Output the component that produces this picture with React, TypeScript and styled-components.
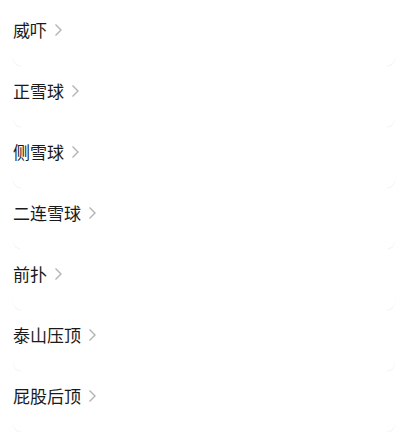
import styled, { createGlobalStyle } from 'styled-components';

const GlobalStyle = createGlobalStyle`
  html, body {
    margin: 0;
    padding: 0;
    background: #ffffff;
  }
  body {
    font-family: "Noto Sans CJK SC", "Noto Sans", sans-serif;
  }
`;

const List = styled.div`
  display: flex;
  flex-direction: column;
  padding-top: 5px;
`;

const Card = styled.div`
  display: flex;
  align-items: center;
  height: 61px;
  box-sizing: border-box;
  padding: 14px 0 25px 0;
  margin: 0 14px 0 13px;
  border-radius: 9px;
  background: #ffffff;
  box-shadow: 0 1px 1px rgba(0, 0, 0, 0.06);
`;

const Label = styled.span`
  font-size: 17px;
  line-height: 22px;
  color: #1a1a1a;
`;

const Chevron = styled.svg`
  margin-left: 7px;
  width: 9px;
  height: 14px;
`;

const items = ['威吓', '正雪球', '侧雪球', '二连雪球', '前扑', '泰山压顶', '屁股后顶'];

const App: React.FC = () => {
  return (
    <>
      <GlobalStyle />
      <List>
        {items.map((name) => (
          <Card key={name}>
            <Label>{name}</Label>
            <Chevron viewBox="0 0 9 14">
              <path d="M1.5 1.5 L7 7 L1.5 12.5" fill="none" stroke="#b3b3b3" strokeWidth="1.4" />
            </Chevron>
          </Card>
        ))}
      </List>
    </>
  );
};

export default App;
